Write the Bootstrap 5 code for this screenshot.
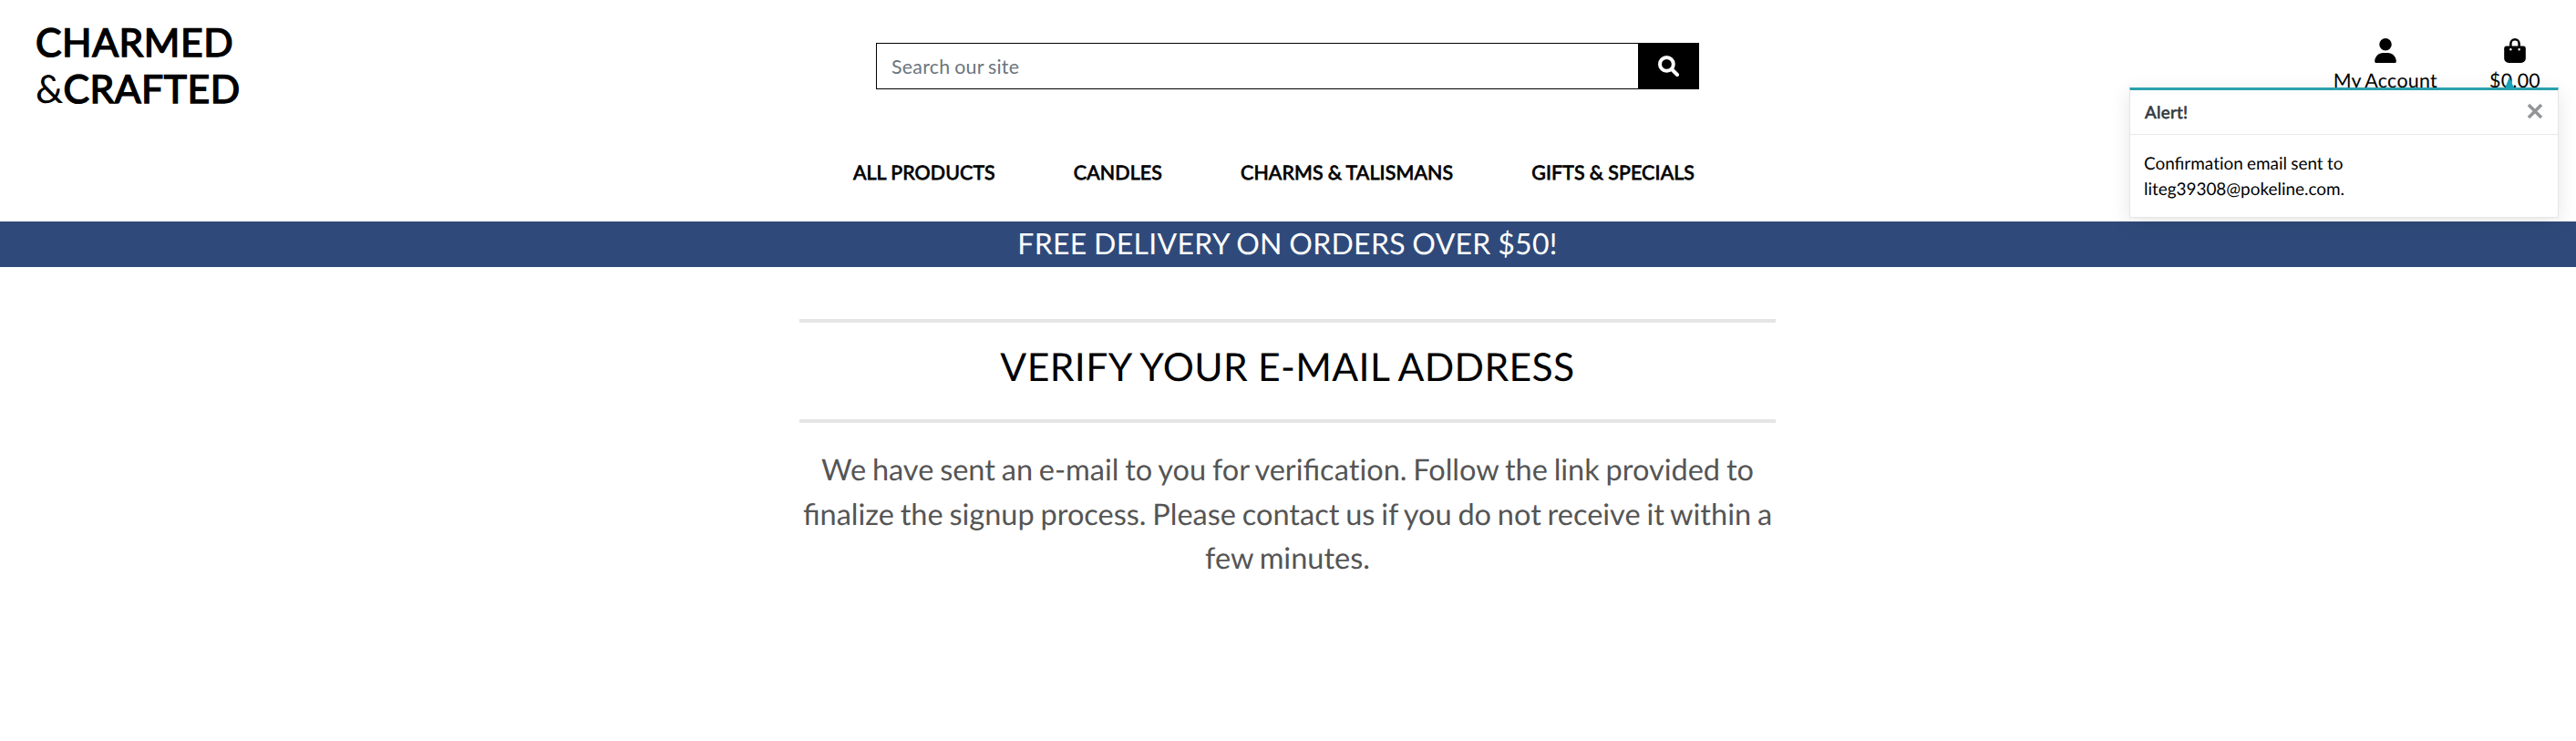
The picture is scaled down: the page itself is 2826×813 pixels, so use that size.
<!DOCTYPE html>
<html lang="en">
<head>
<meta charset="utf-8">
<meta name="viewport" content="width=device-width, initial-scale=1">
<title>Charmed &amp; Crafted</title>
<link href="https://cdn.jsdelivr.net/npm/bootstrap@5.3.0/dist/css/bootstrap.min.css" rel="stylesheet">
<style>
html { font-size: 21.333px; }
body { font-family: Lato, sans-serif; color: #000; background: #fff; overflow: hidden; text-rendering: geometricPrecision; }
.site-header { height: 243px; }
.top-row { height: 139px; }
.logo { font-size: 2rem; line-height: 51.2px; padding: 21px 0 0 39px; color: #000; }
.faux-bold { -webkit-text-stroke: 1.5px currentColor; letter-spacing: .55px; }
.search-box { padding: 47px 20px 0 19px; }
.search-box .form-control { height: 51px; border: 1px solid #000; border-right: 0; font-size: 1rem; padding: 0 16px 0 16px; letter-spacing: .27px; word-spacing: -1px; }
.search-box .form-control::placeholder { color: #6c757d; }
.search-box .btn { width: 67px; height: 51px; background: #000; padding: 0; }
.tools { padding: 42px 39px 0 0; gap: 57px; line-height: 32px; letter-spacing: .3px; word-spacing: -1px; }
.tools svg { height: 27px; width: 24px; display: block; margin: 0 auto 3px; }
.main-menu { gap: 86px; padding: 34px 31px 0 0; line-height: 32px; }
.main-menu a { color: #000; text-decoration: none; -webkit-text-stroke: .8px #000; letter-spacing: .16px; word-spacing: -.5px; }
.promo { height: 50px; background: #2f4a7a; color: #fff; font-size: 1.5rem; line-height: 48px; letter-spacing: .3px; word-spacing: -1px; padding-right: 1px; }
.verify { width: 1072px; padding: 57px 1px 0 0; }
.verify hr { height: 4px; border: 0; background: #e5e5e5; opacity: 1; margin: 0; }
.verify h2 { font-size: 2rem; line-height: 51px; margin: 23px 0 32px; font-weight: 400; letter-spacing: .4px; word-spacing: -.4px; }
.verify p { font-size: 32.5px; line-height: 48.7px; color: #555; margin: 27px 0 0; word-spacing: -1.5px; }
.split { font-variant-ligatures: none; }
.notice { position: absolute; left: 2336px; top: 96px; width: 471px; font-size: .875rem; }
.notice .toast { width: 100%; height: 143px; border: 1px solid #e5e5e5; border-top: 3px solid #2aa0ae; border-radius: 0; background: #fff; font-size: .875rem; box-shadow: 0 5px 21px rgba(0,0,0,.1); }
.notice .toast-header { height: 49px; padding: 0 16px; background: #fff; color: #343a40; border-bottom: 1px solid #e8e8e8; border-radius: 0; }
.notice .alert-title { -webkit-text-stroke: .7px currentColor; letter-spacing: .35px; }
.notice .toast-body { padding: 18px 15px 15px; font-size: 18.9px; line-height: 28px; color: #000; word-spacing: -.5px; }
.notice .toast-header svg { margin-bottom: 2px; }
.notice .arrow { position: absolute; left: 412px; top: -12px; width: 10px; height: 13px; }
</style>
</head>
<body>
<header class="site-header">
  <div class="row g-0 top-row">
    <div class="col-4 logo"><span class="faux-bold">CHARMED</span><br>&amp;<span class="faux-bold">CRAFTED</span></div>
    <div class="col-4 search-box">
      <form class="d-flex">
        <input class="form-control rounded-0" type="text" placeholder="Search our site">
        <button class="btn rounded-0 d-flex flex-shrink-0 align-items-center justify-content-center" type="button" aria-label="Search">
          <svg width="23" height="23" viewBox="0 0 23 23" fill="none" stroke="#fff" stroke-width="4" stroke-linecap="round"><circle cx="9.4" cy="9.4" r="7.4"/><path d="M15 15l6 6"/></svg>
        </button>
      </form>
    </div>
    <div class="col-4 tools d-flex justify-content-end">
      <div class="text-center"><svg viewBox="0 0 448 512"><path d="M224 256A128 128 0 1 0 224 0a128 128 0 1 0 0 256zm-45.700 48C79.800 304 0 383.800 0 482.300 0 498.700 13.300 512 29.700 512h388.600c16.400 0 29.700-13.300 29.700-29.700 0-98.500-79.800-178.300-178.300-178.300z"/></svg>My Account</div>
      <div class="text-center"><svg viewBox="0 0 448 512"><path d="M112 112a112 112 0 0 1 224 0v48h64a48 48 0 0 1 48 48v208a96 96 0 0 1-96 96H96a96 96 0 0 1-96-96V208a48 48 0 0 1 48-48h64zm48 48h128v-48a64 64 0 0 0-128 0zm-24 96a24 24 0 1 0 0-48 24 24 0 0 0 0 48zm200-24a24 24 0 1 0-48 0 24 24 0 0 0 48 0z"/></svg>$0.00</div>
    </div>
  </div>
  <nav class="main-menu d-flex justify-content-center">
    <a href="#">ALL PRODUCTS</a><a href="#">CANDLES</a><a href="#">CHARMS &amp; TALISMANS</a><a href="#">GIFTS &amp; SPECIALS</a>
  </nav>
</header>
<div class="notice">
  <div class="toast show" role="alert">
    <div class="toast-header d-flex justify-content-between"><span class="alert-title">Alert!</span>
      <svg class="me-0" width="18" height="18" viewBox="0 0 18 18" stroke="#939698" stroke-width="3.6"><path d="M2 2l14 14M16 2L2 16"/></svg></div>
    <div class="toast-body">Confirma<span class="split">ti</span>on email sent to<br>liteg39308@pokeline.com.</div>
  </div>
  <svg class="arrow" viewBox="0 0 10 13"><path d="M5 0l5 13H0z" fill="#17a2b8"/></svg>
</div>
<div class="promo text-center">FREE DELIVERY ON ORDERS OVER $50!</div>
<main class="verify mx-auto text-center">
  <hr>
  <h2>VERIFY YOUR E-MAIL ADDRESS</h2>
  <hr>
  <p>We have sent an e-mail to you for verifica<span class="split">ti</span>on. Follow the link provided to<br>finalize the signup process. Please contact us if you do not receive it within a<br>few minutes.</p>
</main>
<script src="https://cdn.jsdelivr.net/npm/bootstrap@5.3.0/dist/js/bootstrap.bundle.min.js"></script>
</body>
</html>
